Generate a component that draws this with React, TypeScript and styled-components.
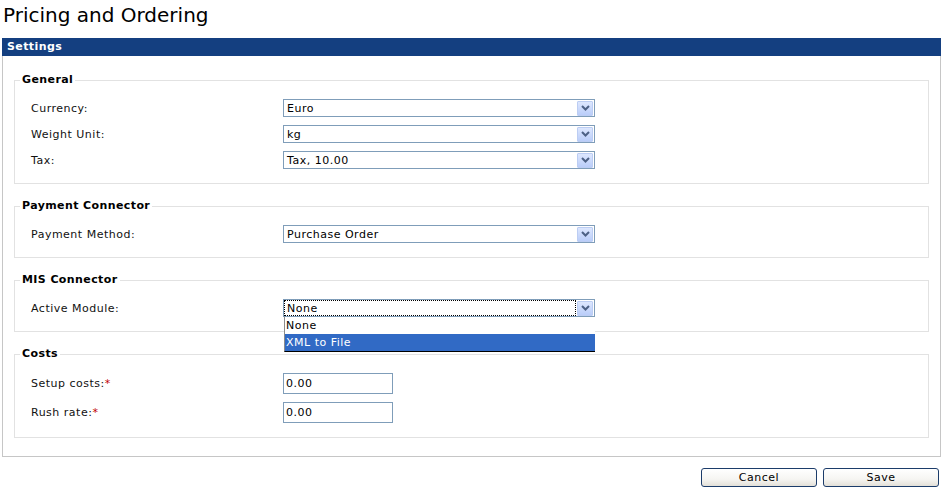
import React from "react";
import styled, { createGlobalStyle } from "styled-components";

const Global = createGlobalStyle`
  html, body { margin: 0; padding: 0; background: #ffffff; }
  body {
    font-family: "DejaVu Sans", Verdana, sans-serif;
    font-size: 11px;
    color: #000;
  }
  * { box-sizing: border-box; }
`;

const Page = styled.div`
  width: 948px;
  height: 492px;
  overflow: hidden;
`;

const Title = styled.h1`
  margin: 0;
  padding: 3px 0 0 3px;
  font-size: 20px;
  line-height: 24px;
  font-weight: normal;
  color: #000;
`;

const Panel = styled.section`
  margin: 11px 0 0 2px;
  width: 939px;
`;

const PanelHeader = styled.div`
  height: 18px;
  line-height: 18px;
  background: #143f80;
  color: #fff;
  font-weight: bold;
  font-size: 11px;
  letter-spacing: 0.4px;
  padding-left: 5px;
`;

const PanelBody = styled.div`
  border: 1px solid #c6c6c6;
  border-top: none;
  padding: 17px 11px 18px 11px;
  display: flex;
  flex-direction: column;
  gap: 15px;
`;

const Group = styled.fieldset`
  margin: 0;
  padding: 0;
  border: 1px solid #e2e2e2;
  min-width: 0;
`;

const Legend = styled.legend`
  margin-left: 5px;
  padding: 0 2px;
  font-weight: bold;
  font-size: 11px;
  line-height: 14px;
  letter-spacing: 0.4px;
  color: #000;
`;

const Rows = styled.div`
  padding: 12px 0 14px 16px;
  display: flex;
  flex-direction: column;
  gap: 8px;
`;

const Row = styled.div`
  display: grid;
  grid-template-columns: 252px auto;
  align-items: center;
`;

const Label = styled.span`
  letter-spacing: 0.5px;
  color: #111;
`;

const Required = styled.span`
  color: #c00000;
`;

const SelectWrap = styled.div`
  position: relative;
  width: 312px;
`;

const SelectBox = styled.div`
  width: 312px;
  height: 18px;
  border: 1px solid #7f9db9;
  background: #fff;
  display: flex;
  align-items: stretch;
  padding: 0 1px 0 0;
`;

const SelectValue = styled.div<{ $focused?: boolean }>`
  flex: 1;
  display: flex;
  align-items: center;
  padding-left: 2px;
  letter-spacing: 0.5px;
  border: 1px dotted ${(p) => (p.$focused ? "#000" : "transparent")};
  margin-right: 1px;
`;

const ArrowButton = styled.div`
  width: 16px;
  align-self: center;
  height: 15px;
  border: 1px solid #bccdf3;
  border-radius: 1px;
  background: linear-gradient(#dde7fe, #bacdf9);
  display: flex;
  align-items: center;
  justify-content: center;
`;

const DropList = styled.ul`
  position: absolute;
  left: 1px;
  top: 100%;
  width: 311px;
  margin: 0;
  padding: 0;
  list-style: none;
  background: #fff;
  border-left: 1px solid #8c8c8c;
  border-bottom: 1px solid #000;
  z-index: 5;
`;

const DropItem = styled.li<{ $selected?: boolean }>`
  height: 17px;
  line-height: 17px;
  padding-left: 1px;
  letter-spacing: 0.5px;
  background: ${(p) => (p.$selected ? "#316ac5" : "#fff")};
  color: ${(p) => (p.$selected ? "#fff" : "#000")};
`;

const TextInput = styled.div`
  width: 110px;
  height: 21px;
  border: 1px solid #7f9db9;
  background: #fff;
  padding-left: 2px;
  display: flex;
  align-items: center;
  letter-spacing: 0.5px;
`;

const Actions = styled.div`
  display: flex;
  justify-content: flex-end;
  gap: 6px;
  padding-right: 9px;
  margin-top: 11px;
`;

const Button = styled.button`
  width: 116px;
  height: 19px;
  border: 1px solid #1c3c6a;
  border-radius: 3px;
  background: linear-gradient(#ffffff 0%, #f6f5f2 60%, #e3e0d8 100%);
  font-family: "DejaVu Sans", Verdana, sans-serif;
  font-size: 11px;
  letter-spacing: 0.5px;
  color: #000;
  padding: 0;
  line-height: 17px;
`;

const Chevron = () => (
  <svg width="9" height="6" viewBox="0 0 9 6">
    <path d="M1 1 L4.5 4.5 L8 1" fill="none" stroke="#4d6185" strokeWidth="2" />
  </svg>
);

type SelectProps = {
  value: string;
  focused?: boolean;
  options?: { label: string; selected?: boolean }[];
};

const Select: React.FC<SelectProps> = ({ value, focused, options }) => (
  <SelectWrap>
    <SelectBox>
      <SelectValue $focused={focused}>{value}</SelectValue>
      <ArrowButton>
        <Chevron />
      </ArrowButton>
    </SelectBox>
    {options && (
      <DropList>
        {options.map((o) => (
          <DropItem key={o.label} $selected={o.selected}>
            {o.label}
          </DropItem>
        ))}
      </DropList>
    )}
  </SelectWrap>
);

export default function App() {
  return (
    <Page>
      <Global />
      <Title>Pricing and Ordering</Title>
      <Panel>
        <PanelHeader>Settings</PanelHeader>
        <PanelBody>
          <Group>
            <Legend>General</Legend>
            <Rows>
              <Row>
                <Label>Currency:</Label>
                <Select value="Euro" />
              </Row>
              <Row>
                <Label>Weight Unit:</Label>
                <Select value="kg" />
              </Row>
              <Row>
                <Label>Tax:</Label>
                <Select value="Tax, 10.00" />
              </Row>
            </Rows>
          </Group>
          <Group>
            <Legend>Payment Connector</Legend>
            <Rows>
              <Row>
                <Label>Payment Method:</Label>
                <Select value="Purchase Order" />
              </Row>
            </Rows>
          </Group>
          <Group>
            <Legend>MIS Connector</Legend>
            <Rows>
              <Row>
                <Label>Active Module:</Label>
                <Select
                  value="None"
                  focused
                  options={[{ label: "None" }, { label: "XML to File", selected: true }]}
                />
              </Row>
            </Rows>
          </Group>
          <Group>
            <Legend>Costs</Legend>
            <Rows>
              <Row>
                <Label>
                  Setup costs:<Required>*</Required>
                </Label>
                <TextInput>0.00</TextInput>
              </Row>
              <Row>
                <Label>
                  Rush rate:<Required>*</Required>
                </Label>
                <TextInput>0.00</TextInput>
              </Row>
            </Rows>
          </Group>
        </PanelBody>
      </Panel>
      <Actions>
        <Button>Cancel</Button>
        <Button>Save</Button>
      </Actions>
    </Page>
  );
}
